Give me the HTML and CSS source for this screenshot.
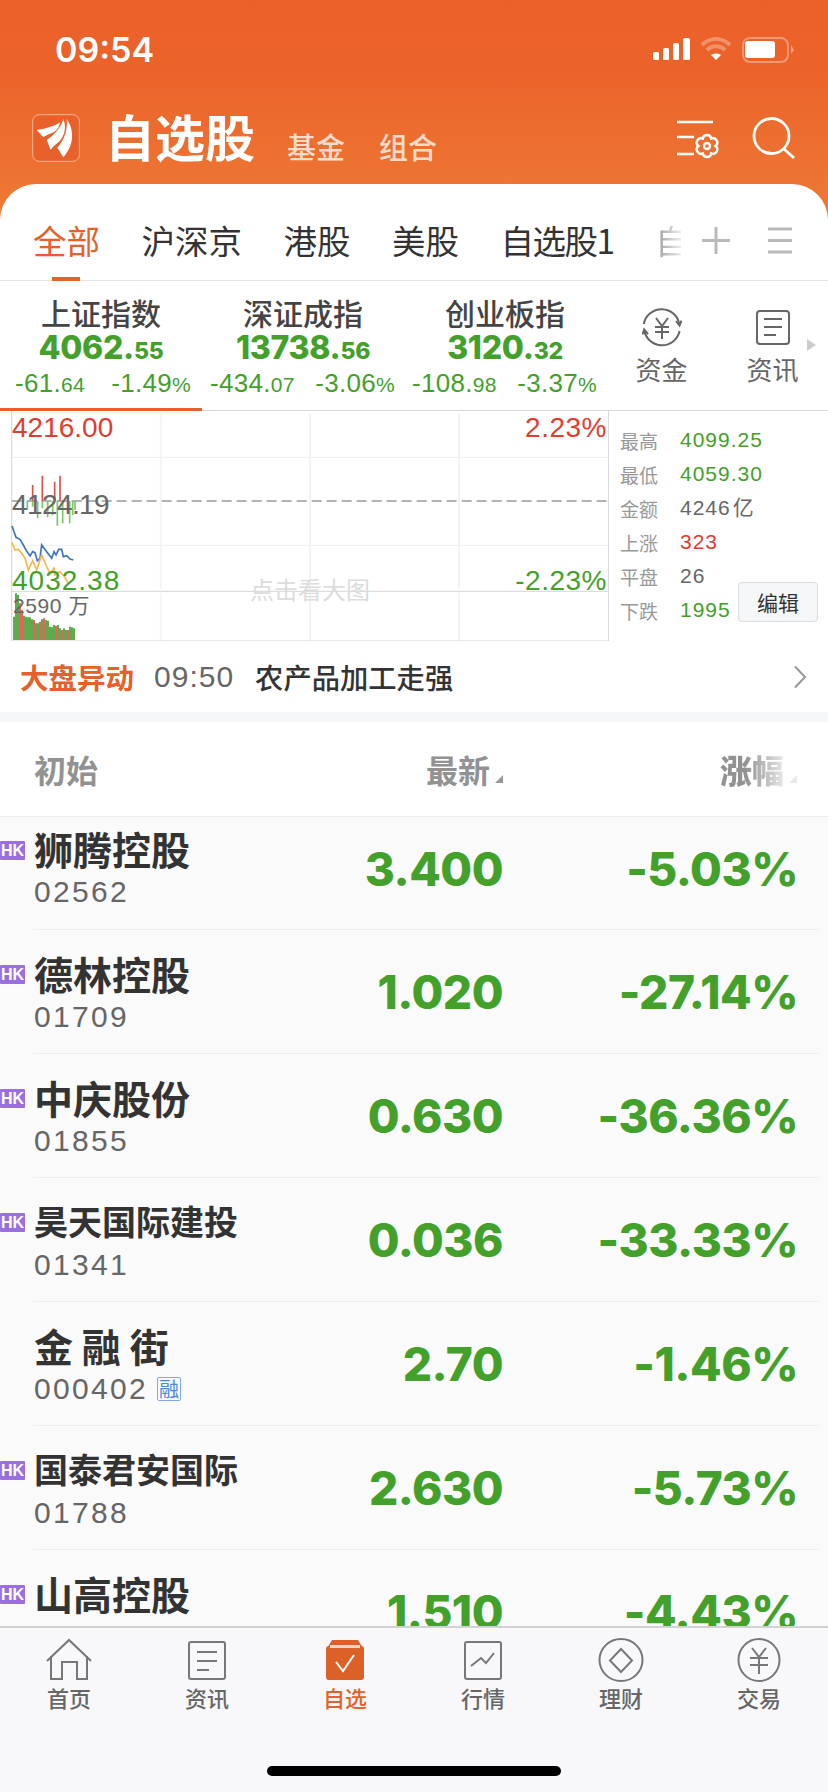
FILE: index.html
```html
<!DOCTYPE html>
<html lang="zh-CN">
<head>
    <meta charset="UTF-8">
    <meta name="viewport" content="width=device-width, initial-scale=1.0">
    <link rel="stylesheet" href="styles.css">
    <title>自选股</title>
</head>
<body>
<div class="screen">

    <div class="status-bar">
        <span class="time">09:54</span>
        <svg class="status-icons" width="142" height="26" viewBox="653 37 142 26">
            <rect x="653" y="52" width="6" height="8" rx="1.5" fill="#fff"/>
            <rect x="663" y="48" width="6" height="12" rx="1.5" fill="#fff"/>
            <rect x="673" y="43" width="6" height="17" rx="1.5" fill="#fff"/>
            <rect x="683" y="38" width="7" height="22" rx="1.5" fill="#fff"/>
            <path d="M702 45 C710 37 722 37 730 45" fill="none" stroke="#fff" stroke-opacity=".3" stroke-width="4"/>
            <path d="M707 50 C712 45 720 45 725 50" fill="none" stroke="#fff" stroke-opacity=".3" stroke-width="4"/>
            <path d="M711 55 C714 53 718 53 721 55 L716 60 Z" fill="#fff"/>
            <rect x="743" y="38" width="45" height="24" rx="7" fill="none" stroke="#fff" stroke-opacity=".35" stroke-width="2"/>
            <rect x="745" y="41" width="30" height="17" rx="3" fill="#fff"/>
            <path d="M791 45 L794 50 L791 54 Z" fill="#fff" fill-opacity=".4"/>
        </svg>
    </div>

    <div class="title-bar">
        <svg class="logo" width="48" height="48" viewBox="24 27 144 144">
            <rect x="26" y="29" width="140" height="140" rx="20" fill="#E8602A" stroke="#F7B795" stroke-width="3"/>
            <path d="M38 75 C60 72 90 65 108 52 C106 68 96 80 82 85 C74 88 65 92 58 97 Z" fill="#fff"/>
            <path d="M68 105 C90 90 110 70 118 42 C128 65 122 95 105 110 C95 118 85 125 80 135 Z" fill="#fff"/>
            <path d="M100 128 C120 105 132 75 128 42 C148 70 155 115 118 157 Z" fill="#fff"/>
        </svg>
        <h1 class="page-title">自选股</h1>
        <span class="title-link">基金</span>
        <span class="title-link">组合</span>
        <svg class="title-icons" width="120" height="44" viewBox="675 116 120 44" fill="none" stroke="#fff">
            <path d="M676 122 H712 M676 137 H693 M676 154 H693" stroke-width="2.5"/>
            <path d="M714.5 146 A4.300 4.300 0 0 1 710.250 153.400 A4.300 4.300 0 0 1 701.750 153.400 A4.300 4.300 0 0 1 697.500 146 A4.300 4.300 0 0 1 701.750 138.600 A4.300 4.300 0 0 1 710.250 138.600 A4.300 4.300 0 0 1 714.500 146 Z" stroke-width="2.5"/>
            <circle cx="706" cy="146" r="3" stroke-width="2.5"/>
            <circle cx="770.5" cy="136" r="17.5" stroke-width="2.8"/>
            <path d="M783 149 L793 158" stroke-width="2.8"/>
        </svg>
    </div>

    <div class="card">
        <div class="tabs">
            <span class="tab tab-active">全部</span>
            <span class="tab">沪深京</span>
            <span class="tab">港股</span>
            <span class="tab">美股</span>
            <span class="tab tab-custom">自选股1</span>
            <span class="tab tab-fade">自</span>
            <svg class="tab-tools" width="92" height="30" viewBox="701 226 92 30" fill="none" stroke="#b9b9b9" stroke-width="3">
                <path d="M702 240.5 H730 M716 227 V254"/>
                <path d="M768 229 H792 M768 240.5 H792 M768 252 H792"/>
            </svg>
        </div>

        <div class="index-row">
            <div class="index index-active">
                <div class="index-name">上证指数</div>
                <div class="index-value">4062.<small>55</small></div>
                <div class="index-change"><span>-61.<small>64</small></span><span>-1.49<small>%</small></span></div>
            </div>
            <div class="index">
                <div class="index-name">深证成指</div>
                <div class="index-value">13738.<small>56</small></div>
                <div class="index-change"><span>-434.<small>07</small></span><span>-3.06<small>%</small></span></div>
            </div>
            <div class="index">
                <div class="index-name">创业板指</div>
                <div class="index-value">3120.<small>32</small></div>
                <div class="index-change"><span>-108.<small>98</small></span><span>-3.37<small>%</small></span></div>
            </div>
            <div class="shortcut">
                <svg width="40" height="40" viewBox="0 0 40 40" fill="none" stroke="#666" stroke-width="2">
                    <path d="M1.800 16 A18 18 0 0 1 37.400 17"/>
                    <path d="M37.600 23 A18 18 0 0 1 2.200 22"/>
                    <path d="M34 13 L37.500 17.500 L39.500 12.500 M6 26 L2.200 21.500 L0.500 26.500"/>
                    <path d="M14 10 L20 18 L26 10 M13 19 H27 M13 24 H27 M20 18 V31"/>
                </svg>
                <span>资金</span>
            </div>
            <div class="shortcut">
                <svg width="36" height="40" viewBox="0 0 36 40" fill="none" stroke="#666" stroke-width="2">
                    <rect x="2" y="3" width="32" height="33" rx="3"/>
                    <path d="M9 11 H27 M9 19 H27 M9 27 H21"/>
                </svg>
                <span>资讯</span>
            </div>
            <span class="more-arrow"></span>
        </div>

        <div class="market">
            <div class="chart">
                <svg width="598" height="230" viewBox="33 3 1794 690" fill="none">
                    <path d="M482 12 V537 M482 548 V693 M930 12 V537 M930 548 V693 M1377 12 V537 M1377 548 V693" stroke="#f1f1f6" stroke-width="5"/>
                    <path d="M35 142 H1826 M35 406 H1826" stroke="#efeff3" stroke-width="3"/>
                    <path d="M35 273 H1826" stroke="#666" stroke-width="3" stroke-dasharray="30 15"/>
                    <path d="M35 544 H1826" stroke="#d6d6da" stroke-width="3"/>
                    <path d="M35 3 V693 H1826 V3" stroke="#d3d3d8" stroke-width="3"/>
                    <path d="M98 225 V273 M127 197 V273 M164 215 V273 M180 197 V273" stroke="#d9534a" stroke-width="5"/>
                    <path d="M82 273 V300 M98 273 V290 M113 273 V325 M127 273 V295 M143 273 V322 M158 273 V315 M172 273 V347 M188 273 V340 M209 273 V340 M218 273 V315 M225 273 V300" stroke="#7fc467" stroke-width="5"/>
                    <polyline points="36,348 48,382 60,388 70,405 78,420 90,438 98,425 105,428 112,452 120,445 125,405 140,425 155,445 162,425 168,435 176,418 185,418 190,440 200,437 210,447 220,450" stroke="#3f74c4" stroke-width="5"/>
                    <polyline points="36,398 45,420 55,418 65,430 75,445 85,480 98,452 110,480 125,435 140,470 150,490 162,475 165,495 178,485 190,495 205,520" stroke="#f5b84e" stroke-width="5"/>
                    <path d="M42 690 V620 M48 690 V550 M54 690 V555 M72 690 V618 M78 690 V620 M84 690 V622 M90 690 V622 M96 690 V628 M108 690 V640 M114 690 V640 M126 690 V628 M138 690 V630 M144 690 V632 M150 690 V650 M156 690 V652 M162 690 V645 M174 690 V645 M180 690 V655 M192 690 V655 M198 690 V660 M210 690 V650 M216 690 V652 M222 690 V655" stroke="#3f9a2b" stroke-width="5"/>
                    <path d="M60 690 V580 M66 690 V600 M102 690 V630 M120 690 V635 M132 690 V625 M168 690 V648 M186 690 V660 M204 690 V660" stroke="#e4443a" stroke-width="5"/>
                </svg>
                <span class="chart-label label-high">4216.00</span>
                <span class="chart-label label-mid">4124.19</span>
                <span class="chart-label label-low">4032.38</span>
                <span class="chart-label label-up">2.23%</span>
                <span class="chart-label label-down">-2.23%</span>
                <span class="chart-vol">2590 万</span>
                <span class="chart-hint">点击看大图</span>
            </div>
            <div class="stats">
                <span class="stat-label">最高</span><span class="stat-value stat-wide green">4099.25</span>
                <span class="stat-label">最低</span><span class="stat-value stat-wide green">4059.30</span>
                <span class="stat-label">金额</span><span class="stat-value stat-wide">4246<i class="stat-unit">亿</i></span>
                <span class="stat-label">上涨</span><span class="stat-value stat-wide red">323</span>
                <span class="stat-label">平盘</span><span class="stat-value">26</span>
                <span class="stat-label">下跌</span><span class="stat-value green">1995</span>
                <button class="edit-button">编辑</button>
            </div>
        </div>

        <div class="alert">
            <span class="alert-tag">大盘异动</span>
            <span class="alert-time">09:50</span>
            <span class="alert-text">农产品加工走强</span>
            <svg class="alert-arrow" width="14" height="24" viewBox="0 0 14 24" fill="none" stroke="#999" stroke-width="2"><path d="M2 1.500 L12 12 L2 22.500"/></svg>
        </div>

        <div class="band"></div>

        <div class="list-head">
            <span class="head-name">初始</span>
            <span class="head-sort">最新</span>
            <span class="head-sort head-pct"><b>涨幅</b></span>
        </div>

        <div class="list">
            <div class="row row-first">
                <span class="hk-tag">HK</span>
                <div class="stock"><div class="stock-name">狮腾控股</div><div class="stock-code">02562</div></div>
                <div class="price">3.400</div>
                <div class="pct">-5.03%</div>
            </div>
            <div class="row">
                <span class="hk-tag">HK</span>
                <div class="stock"><div class="stock-name">德林控股</div><div class="stock-code">01709</div></div>
                <div class="price">1.020</div>
                <div class="pct">-27.14%</div>
            </div>
            <div class="row">
                <span class="hk-tag">HK</span>
                <div class="stock"><div class="stock-name">中庆股份</div><div class="stock-code">01855</div></div>
                <div class="price">0.630</div>
                <div class="pct">-36.36%</div>
            </div>
            <div class="row">
                <span class="hk-tag">HK</span>
                <div class="stock"><div class="stock-name name-long">昊天国际建投</div><div class="stock-code">01341</div></div>
                <div class="price">0.036</div>
                <div class="pct">-33.33%</div>
            </div>
            <div class="row">
                <div class="stock"><div class="stock-name">金 融 街</div><div class="stock-code">000402<span class="rong-tag">融</span></div></div>
                <div class="price">2.70</div>
                <div class="pct">-1.46%</div>
            </div>
            <div class="row">
                <span class="hk-tag">HK</span>
                <div class="stock"><div class="stock-name name-long">国泰君安国际</div><div class="stock-code">01788</div></div>
                <div class="price">2.630</div>
                <div class="pct">-5.73%</div>
            </div>
            <div class="row">
                <span class="hk-tag">HK</span>
                <div class="stock"><div class="stock-name">山高控股</div><div class="stock-code">00412</div></div>
                <div class="price">1.510</div>
                <div class="pct">-4.43%</div>
            </div>
        </div>

        <div class="tabbar">
            <div class="tabbar-item">
                <svg width="46" height="44" viewBox="0 0 46 44" fill="none" stroke="#777" stroke-width="2"><path d="M1 23 L23 2 L45 23"/><path d="M5 18 V41 H16 V24 H31 V41 H41 V18"/></svg>
                <span>首页</span>
            </div>
            <div class="tabbar-item">
                <svg width="40" height="44" viewBox="0 0 40 44" fill="none" stroke="#777" stroke-width="2"><rect x="2" y="4" width="36" height="37" rx="2"/><path d="M10 14 H30 M10 23 H30 M10 32 H22"/></svg>
                <span>资讯</span>
            </div>
            <div class="tabbar-item tabbar-active">
                <svg width="40" height="44" viewBox="0 0 40 44"><rect x="1" y="8" width="38" height="34" rx="3" fill="#DB6128"/><path d="M7 2 H33 L39 12 H1 Z" fill="#DB6128"/><rect x="5" y="7" width="30" height="3" fill="#F6D5C2"/><path d="M11 24 L18 33 L29 17" fill="none" stroke="#fff" stroke-width="2"/></svg>
                <span>自选</span>
            </div>
            <div class="tabbar-item">
                <svg width="40" height="44" viewBox="0 0 40 44" fill="none" stroke="#777" stroke-width="2"><rect x="2" y="4" width="36" height="37" rx="2"/><path d="M8 28 L18 20 L23 25 L31 15"/></svg>
                <span>行情</span>
            </div>
            <div class="tabbar-item">
                <svg width="46" height="44" viewBox="0 0 46 44" fill="none" stroke="#777" stroke-width="2"><ellipse cx="23" cy="22" rx="21.500" ry="21"/><path d="M23 11 L34 22.500 L23 34 L12 22.500 Z"/></svg>
                <span>理财</span>
            </div>
            <div class="tabbar-item">
                <svg width="44" height="44" viewBox="0 0 44 44" fill="none" stroke="#777" stroke-width="2"><ellipse cx="22" cy="22" rx="20.500" ry="21"/><path d="M15 10 L22 19 L29 10 M13 20 H31 M13 27 H31 M22 19 V36"/></svg>
                <span>交易</span>
            </div>
            <span class="home-bar"></span>
        </div>
    </div>
</div>
</body>
</html>
```

FILE: styles.css
```css
* {
    box-sizing: border-box;
}

body {
    margin: 0;
    font-family: "Noto Sans CJK SC", "Liberation Sans", sans-serif;
    color: #333;
}

small {
    font-size: 0.72em;
}

.green {
    color: #43a02b;
}

.red {
    color: #e23b30;
}

.screen {
    width: 828px;
    height: 1792px;
    display: flex;
    flex-direction: column;
    overflow: hidden;
    background: linear-gradient(#eb6029 0, #eb632a 70px, #ee7a36 220px);
}

/* status bar and title */
.status-bar {
    height: 100px;
    display: flex;
    justify-content: space-between;
    padding: 37px 33px 0 55px;
}

.time {
    font-family: Inter, sans-serif;
    font-weight: 600;
    font-size: 34px;
    line-height: 26px;
    color: #fff;
}

.title-bar {
    height: 84px;
    display: flex;
    padding: 14px 32px 0 32px;
}

.logo {
    margin-right: 25px;
}

.page-title {
    margin: -3px 32px 0 0;
    font-size: 50px;
    line-height: 48px;
    font-weight: 700;
    color: #fff;
}

.title-link {
    margin: 14px 34px 0 0;
    font-size: 29px;
    line-height: 36px;
    font-weight: 500;
    color: #fbdcca;
}

.title-icons {
    margin-left: auto;
    margin-top: 2px;
}

.card {
    flex: 1;
    min-height: 0;
    display: flex;
    flex-direction: column;
    background: #fff;
    border-radius: 36px 36px 0 0;
}

/* market tabs */
.tabs {
    height: 97px;
    flex-shrink: 0;
    display: flex;
    align-items: flex-start;
    gap: 41.5px;
    padding: 32px 0 0 33px;
    border-bottom: 1px solid #e4e4e7;
}

.tab {
    position: relative;
    height: 65px;
    font-size: 33.5px;
    line-height: 48px;
    color: #333;
    white-space: nowrap;
}

.tab-active {
    color: #e5602a;
}

.tab-active::after {
    content: "";
    position: absolute;
    left: 19px;
    bottom: 0;
    width: 28px;
    height: 4px;
    background: #e5602a;
}

.tab-custom {
    letter-spacing: -1.5px;
}

.tab-fade {
    width: 26px;
    background: linear-gradient(90deg, #999, #eee);
    -webkit-background-clip: text;
    background-clip: text;
    color: transparent;
}

.tab-tools {
    position: absolute;
    right: 35px;
    margin-top: 10px;
}

/* indexes */
.index-row {
    height: 130px;
    flex-shrink: 0;
    display: flex;
    position: relative;
    border-bottom: 1px solid #d8d8dc;
}

.index {
    width: 202px;
    height: 130px;
    text-align: center;
    padding-top: 13px;
}

.index-active {
    border-bottom: 3px solid #e5602a;
}

.index-name {
    font-size: 30px;
    line-height: 36px;
    font-weight: 500;
    color: #444;
}

.index-value {
    font-family: Inter, sans-serif;
    font-weight: 800;
    font-size: 32px;
    line-height: 35px;
    letter-spacing: -0.3px;
    color: #43a02b;
}

.index-change {
    display: flex;
    justify-content: space-between;
    padding: 0 9px 0 8px;
    font-family: "Liberation Sans", sans-serif;
    font-size: 26px;
    line-height: 28px;
    letter-spacing: 0.3px;
    color: #43a02b;
}

.index-change small {
    font-size: 21px;
}

.index-active .index-change {
    padding: 0 11px 0 15px;
}

.shortcut {
    flex: 1;
    padding-top: 27px;
    display: flex;
    flex-direction: column;
    align-items: center;
    gap: 6px;
    font-size: 26px;
    line-height: 30px;
    color: #666;
}

.more-arrow {
    position: absolute;
    left: 807px;
    top: 58px;
    border-left: 9px solid #ccc;
    border-top: 6px solid transparent;
    border-bottom: 6px solid transparent;
}

/* minute chart and stats */
.market {
    height: 230px;
    flex-shrink: 0;
    display: flex;
    padding-left: 11px;
}

.chart {
    position: relative;
    width: 598px;
    height: 230px;
}

.chart svg {
    display: block;
}

.chart-label {
    position: absolute;
    font-family: "Liberation Sans", sans-serif;
    font-size: 28px;
    line-height: 30px;
}

.label-high {
    left: 1px;
    top: 2px;
    color: #e23b30;
}

.label-mid {
    left: 1px;
    top: 79px;
    letter-spacing: -0.6px;
    color: #666;
}

.label-low {
    left: 1px;
    top: 155px;
    letter-spacing: 1px;
    color: #43a02b;
}

.label-up {
    right: 2px;
    top: 2px;
    letter-spacing: 0.5px;
    color: #e23b30;
}

.label-down {
    right: 2px;
    top: 155px;
    letter-spacing: 0.5px;
    color: #43a02b;
}

.chart-vol {
    position: absolute;
    left: 2px;
    top: 183px;
    font-family: "Liberation Sans", "Noto Sans CJK SC", sans-serif;
    font-size: 21px;
    line-height: 24px;
    letter-spacing: 0.6px;
    color: #666;
}

.chart-hint {
    position: absolute;
    left: 239px;
    top: 161px;
    font-size: 24px;
    line-height: 34px;
    color: #dcdcdc;
}

.stats {
    display: grid;
    grid-template-columns: 60px 58px 80px;
    grid-auto-rows: 34px;
    padding: 12px 0 0 11px;
    align-items: center;
}

.stat-label {
    font-size: 19px;
    color: #999;
}

.stat-value {
    font-family: "Liberation Sans", "Noto Sans CJK SC", sans-serif;
    font-size: 21px;
    line-height: 34px;
    letter-spacing: 1px;
}

.stat-wide {
    grid-column: 2 / 4;
}

.stat-value:not(.green):not(.red) {
    color: #666;
}

.stat-unit {
    font-style: normal;
    margin-left: 2px;
}

.edit-button {
    grid-column: 3;
    grid-row: 5 / 7;
    align-self: end;
    height: 40px;
    margin-bottom: 5px;
    padding: 0;
    border: 1px solid #dcdce0;
    border-radius: 4px;
    background: #f6f7f9;
    font-family: inherit;
    font-size: 21px;
    color: #333;
}

/* alert line */
.alert {
    height: 71px;
    flex-shrink: 0;
    display: flex;
    align-items: center;
    padding: 0 21px 0 20px;
}

.alert-tag {
    font-size: 28.5px;
    font-weight: 700;
    color: #e5602a;
}

.alert-time {
    margin-left: 20px;
    font-family: "Liberation Sans", sans-serif;
    font-size: 30px;
    letter-spacing: 1px;
    color: #666;
}

.alert-text {
    margin-left: 21px;
    font-size: 28.3px;
    font-weight: 500;
    color: #333;
}

.alert-arrow {
    margin-left: auto;
}

.band {
    height: 10px;
    flex-shrink: 0;
    background: #f6f7f9;
}

/* stock list */
.list-head {
    height: 95px;
    flex-shrink: 0;
    display: flex;
    align-items: center;
    padding: 0 31px 0 34px;
    border-bottom: 1px solid #ebebee;
    font-size: 32px;
    font-weight: 700;
    color: #929292;
}

.head-name {
    flex: 1;
}

.head-sort::after {
    content: "";
    display: inline-block;
    width: 8px;
    height: 8px;
    margin-left: 5px;
    background: #999;
    clip-path: polygon(100% 0, 100% 100%, 0 100%);
}

.head-pct {
    width: 294px;
    text-align: right;
}

.head-pct b {
    background: linear-gradient(90deg, #929292 40%, #e8e8e8);
    -webkit-background-clip: text;
    background-clip: text;
    color: transparent;
}

.head-pct::after {
    background: #e9e9e9;
}

.list {
    flex: 1;
    min-height: 0;
    overflow: hidden;
    background: #fafafa;
    padding: 0 10px 0 33px;
}

.row {
    position: relative;
    height: 124px;
    display: flex;
    align-items: center;
    border-bottom: 1px solid #eeeeee;
}

.row-first {
    height: 113px;
    padding-bottom: 8px;
}

.stock {
    flex: 1;
    align-self: flex-start;
    padding: 21px 0 0 1px;
}

.row-first .stock {
    padding-top: 9px;
}

.stock-name {
    font-size: 39px;
    line-height: 44px;
    font-weight: 700;
    color: #333;
}

.name-long {
    font-size: 34px;
}

.stock-code {
    display: flex;
    align-items: center;
    margin-top: 2px;
    font-family: "Liberation Sans", sans-serif;
    font-size: 30px;
    line-height: 40px;
    letter-spacing: 2.3px;
    color: #666;
}

.price,
.pct {
    font-family: Inter, sans-serif;
    font-weight: 800;
    font-size: 46px;
    letter-spacing: -0.5px;
    color: #43a02b;
    text-align: right;
}

.pct {
    width: 315px;
    padding-right: 20px;
}

.hk-tag {
    position: absolute;
    left: -33px;
    width: 25px;
    height: 19px;
    border-radius: 1px;
    background: #9c6fe0;
    font-family: "Liberation Sans", sans-serif;
    font-weight: 700;
    font-size: 16px;
    line-height: 19px;
    text-align: center;
    color: #fff;
}

.row-first .hk-tag {
    top: 24px;
}

.row:not(.row-first) .hk-tag {
    top: 35px;
}

.rong-tag {
    margin-left: 9px;
    width: 24px;
    height: 24px;
    border: 1px solid #7fa8e6;
    border-radius: 2px;
    font-family: "Noto Sans CJK SC", sans-serif;
    font-size: 20px;
    line-height: 21px;
    letter-spacing: 0;
    text-align: center;
    color: #4f87d8;
}

/* bottom bar */
.tabbar {
    position: relative;
    height: 166px;
    flex-shrink: 0;
    display: flex;
    padding-top: 10px;
    background: #f8f8fa;
    border-top: 2px solid #d2d2d2;
}

.tabbar-item {
    flex: 1;
    display: flex;
    flex-direction: column;
    align-items: center;
    gap: 1px;
    font-size: 22px;
    line-height: 28px;
    font-weight: 500;
    color: #666;
}

.tabbar-active {
    color: #e5602a;
}

.home-bar {
    position: absolute;
    left: 267px;
    bottom: 16px;
    width: 294px;
    height: 10px;
    border-radius: 5px;
    background: #000;
}
```
